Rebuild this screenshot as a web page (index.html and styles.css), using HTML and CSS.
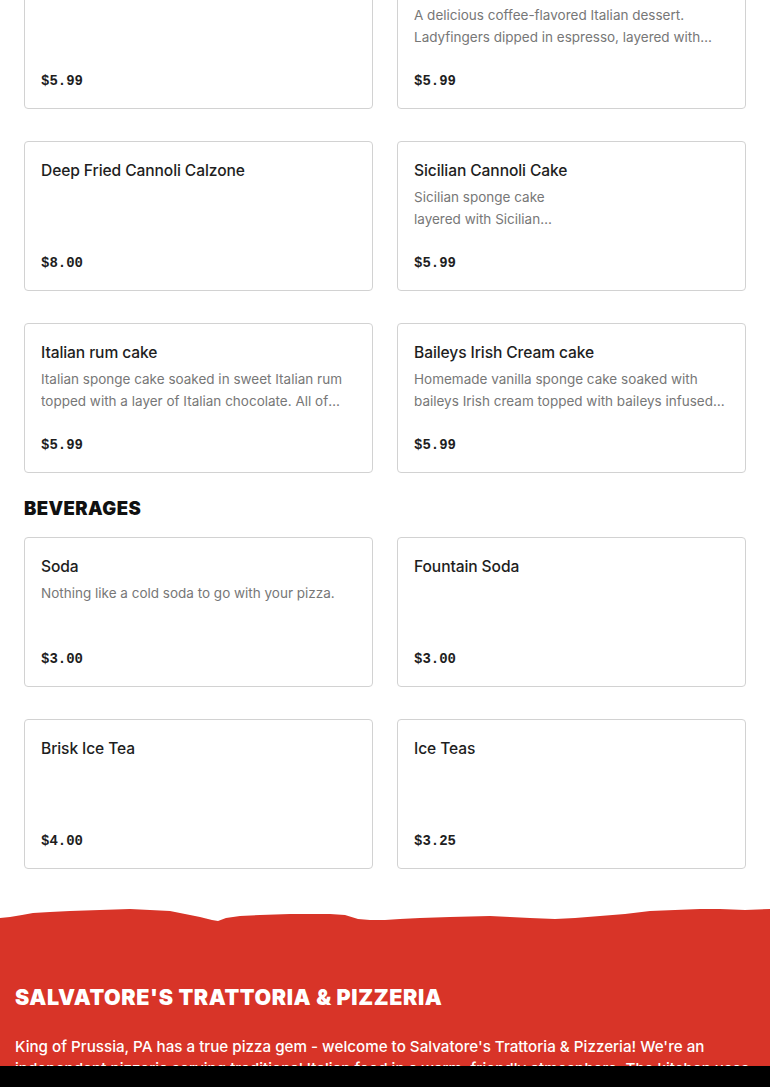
FILE: index.html
```html
<!DOCTYPE html>
<html>
<head>
<meta charset="utf-8">
<link rel="stylesheet" href="styles.css">
</head>
<body>
<main class="menu">
  <div class="grid">
    <div class="card">
      <div class="name">Cannoli</div>
      <div class="desc"></div>
      <div class="price">$5.99</div>
    </div>
    <div class="card">
      <div class="name">Tiramisu</div>
      <div class="desc">A delicious coffee-flavored Italian dessert. Ladyfingers dipped in espresso, layered with mascarpone cream and dusted with cocoa.</div>
      <div class="price">$5.99</div>
    </div>
    <div class="card">
      <div class="name">Deep Fried Cannoli Calzone</div>
      <div class="desc"></div>
      <div class="price">$8.00</div>
    </div>
    <div class="card">
      <div class="name">Sicilian Cannoli Cake</div>
      <div class="desc">Sicilian sponge cake<br>layered with Sicilian<br>ricotta cannoli cream and chocolate chips.</div>
      <div class="price">$5.99</div>
    </div>
    <div class="card">
      <div class="name">Italian rum cake</div>
      <div class="desc">Italian sponge cake soaked in sweet Italian rum topped with a layer of Italian chocolate. All of which is covered in whipped cream.</div>
      <div class="price">$5.99</div>
    </div>
    <div class="card">
      <div class="name">Baileys Irish Cream cake</div>
      <div class="desc">Homemade vanilla sponge cake soaked with baileys Irish cream topped with baileys infused whipped cream.</div>
      <div class="price">$5.99</div>
    </div>
  </div>

  <h2 class="section-title">BEVERAGES</h2>

  <div class="grid">
    <div class="card">
      <div class="name">Soda</div>
      <div class="desc">Nothing like a cold soda to go with your pizza.</div>
      <div class="price">$3.00</div>
    </div>
    <div class="card">
      <div class="name">Fountain Soda</div>
      <div class="desc"></div>
      <div class="price">$3.00</div>
    </div>
    <div class="card">
      <div class="name">Brisk Ice Tea</div>
      <div class="desc"></div>
      <div class="price">$4.00</div>
    </div>
    <div class="card">
      <div class="name">Ice Teas</div>
      <div class="desc"></div>
      <div class="price">$3.25</div>
    </div>
  </div>
</main>

<footer class="footer">
  <svg class="torn" viewBox="0 0 770 24" preserveAspectRatio="none" aria-hidden="true">
    <path d="M0 12 L10 11 L22 9 L33 7 L50 6 L70 5 L100 4 L130 3 L150 4 L170 5 L185 8 L200 11 L212 14 L218 15 L226 12 L240 10 L260 9 L290 8 L330 8 L345 9 L358 13 L370 14 L385 14 L400 13 L420 12 L450 11 L490 10 L510 11 L530 12 L555 13 L575 12 L600 10 L625 8 L650 5 L675 4 L700 3 L720 3 L745 4 L770 3 L770 24 L0 24 Z" fill="#d83428"/>
  </svg>
  <div class="footer-body">
    <h2 class="footer-title">SALVATORE'S TRATTORIA &amp; PIZZERIA</h2>
    <p class="footer-text">King of Prussia, PA has a true pizza gem - welcome to Salvatore's Trattoria &amp; Pizzeria! We're an independent pizzeria serving traditional Italian food in a warm, friendly atmosphere. The kitchen uses fresh ingredients every day.</p>
  </div>
</footer>
<div class="bottom-bar"></div>
</body>
</html>
```

FILE: styles.css
```css
* { box-sizing: border-box; }
html, body { margin: 0; padding: 0; background: #fff; }
body { font-family: Inter, "Noto Sans", sans-serif; color: #1f1f1f; overflow: hidden; }

.menu { padding: 0 24px; margin-top: -41px; }
.grid {
  display: grid;
  grid-template-columns: 1fr 1fr;
  column-gap: 24px;
  row-gap: 32px;
}
.card {
  height: 150px;
  border: 1px solid #d2d2d2;
  border-radius: 4px;
  padding: 16px;
  display: flex;
  flex-direction: column;
  background: #fff;
}
.name {
  padding-top: 1px;
  font-size: 15.6px;
  font-weight: 500;
  line-height: 24px;
  color: #1e1e1e;
  letter-spacing: -0.1px;
}
.desc {
  margin-top: 3px;
  font-size: 13.5px;
  line-height: 22px;
  color: #777;
  display: -webkit-box;
  -webkit-line-clamp: 2;
  -webkit-box-orient: vertical;
  overflow: hidden;
}
.price {
  margin-top: auto;
  font-family: "Liberation Mono", "DejaVu Sans Mono", monospace;
  font-weight: 700;
  font-size: 14px;
  line-height: 22px;
  color: #1e1e1e;
}
.section-title {
  margin: 23px 0 17px;
  font-family: Inter, "Liberation Sans", sans-serif;
  font-weight: 900;
  font-size: 18.5px;
  line-height: 24px;
  letter-spacing: 0.4px;
  color: #111;
}

.footer { margin-top: 37px; }
.torn { display: block; width: 100%; height: 24px; }
.footer-body {
  background: #d83428;
  padding: 56px 15px 40px;
  margin-top: -1px;
  color: #fff;
}
.footer-title {
  margin: 0;
  font-family: Inter, "Liberation Sans", sans-serif;
  font-weight: 900;
  font-size: 21.5px;
  line-height: 24px;
  letter-spacing: 0.6px;
}
.footer-text {
  margin: 27px 0 0;
  font-size: 15.2px;
  font-weight: 500;
  line-height: 22px;
}
.bottom-bar {
  position: fixed;
  left: 0; right: 0; bottom: 0;
  height: 21px;
  background: #000;
}
```
